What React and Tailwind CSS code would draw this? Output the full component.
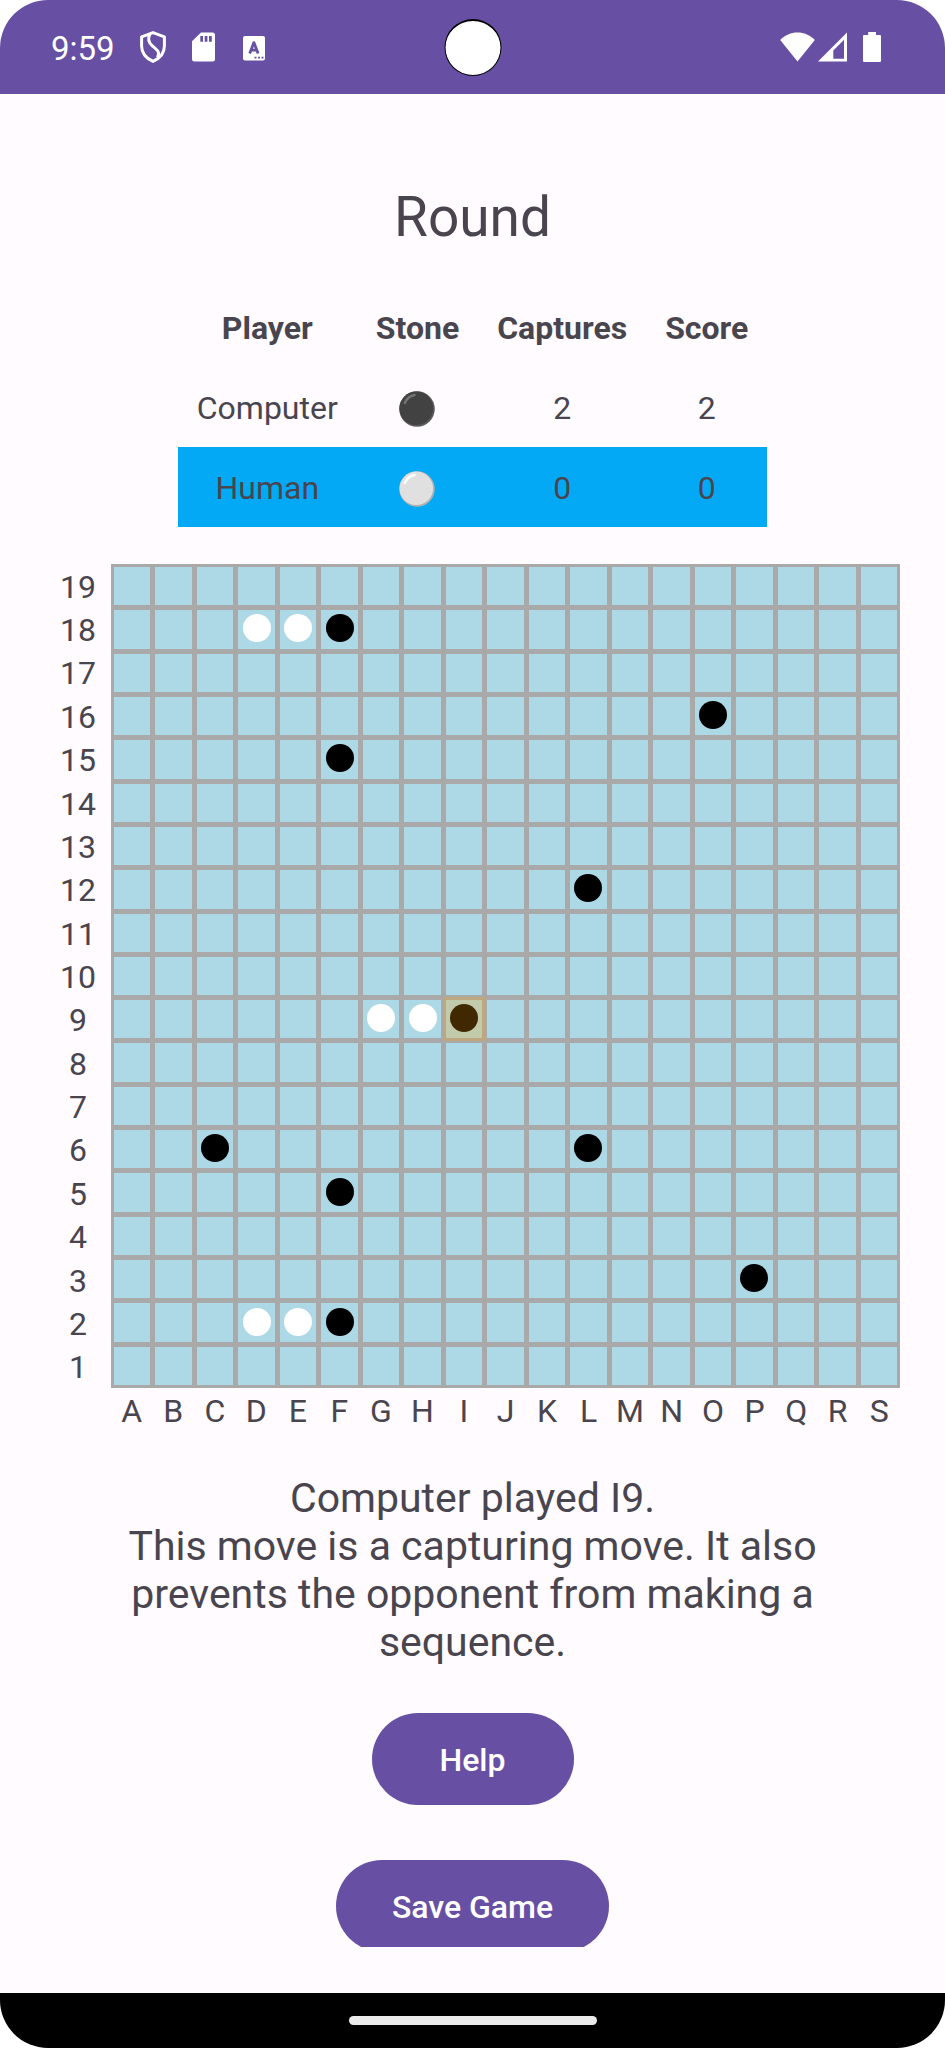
const COLUMNS = 'ABCDEFGHIJKLMNOPQRS'.split('');
const ROWS = Array.from({ length: 19 }, (_, i) => 19 - i);

const STONES = {
  D18: 'white',
  E18: 'white',
  F18: 'black',
  O16: 'black',
  F15: 'black',
  L12: 'black',
  G9: 'white',
  H9: 'white',
  I9: 'black',
  C6: 'black',
  L6: 'black',
  F5: 'black',
  P3: 'black',
  D2: 'white',
  E2: 'white',
  F2: 'black',
};

const LAST_MOVE = 'I9';

const PLAYERS = [
  { name: 'Computer', stone: 'black', captures: 2, score: 2, active: false },
  { name: 'Human', stone: 'white', captures: 0, score: 0, active: true },
];

function ShieldIcon() {
  return (
    <svg className="h-8 w-[26px]" viewBox="0 0 26 32" fill="none" stroke="#fff" strokeWidth="3" strokeLinejoin="round" aria-hidden="true">
      <path d="M13 1.600 L24.400 5.800 V15 C24.400 22.500 19.500 27.500 13 30.400 C6.500 27.500 1.600 22.500 1.600 15 V5.800 Z" />
      <path d="M9.800 3 C7.500 8 8.300 11.500 12.500 15 C17.500 19 20.300 21 17.500 26.500" />
    </svg>
  );
}

function SdCardIcon() {
  return (
    <svg className="h-[30px] w-[23px]" viewBox="0 0 23 30" aria-hidden="true">
      <path fill="#fff" d="M9 0.500 H20.500 A2.500 2.500 0 0 1 23 3 V27 A2.500 2.500 0 0 1 20.500 29.500 H2.500 A2.500 2.500 0 0 1 0 27 V9.300 Z" />
      <path fill="#6750a4" d="M8.300 4 H11 V9.700 H8.300 Z M12.700 4 H15.400 V9.700 H12.700 Z M17 4 H19.800 V9.700 H17 Z" />
    </svg>
  );
}

function KeyboardIcon() {
  return (
    <svg className="h-[25px] w-[22px]" viewBox="0 0 22 25" aria-hidden="true">
      <rect width="22" height="24.500" rx="2" fill="#fff" />
      <path d="M6.700 17.600 L10.900 6.600 L15.100 17.600 M8.200 14.200 H13.600" fill="none" stroke="#6750a4" strokeWidth="2.800" strokeLinejoin="round" />
      <path d="M11.500 20.700 H13.500 V22.500 H11.500 Z M15 20.700 H17 V22.500 H15 Z M18.500 20.700 H20.500 V22.500 H18.500 Z" fill="#6750a4" />
    </svg>
  );
}

function WifiIcon() {
  return (
    <svg className="h-[30px] w-[35px]" viewBox="0 0 35 30" fill="#fff" aria-hidden="true">
      <path d="M17.500 29.500 L0.200 8 C5 3 11 0.500 17.500 0.500 C24 0.500 30 3 34.800 8 Z" />
    </svg>
  );
}

function SignalIcon() {
  return (
    <svg className="h-[30px] w-[29px]" viewBox="0 0 29 30" aria-hidden="true">
      <path fill="#fff" fillRule="evenodd" d="M29 0.500 V29.500 H0 Z M26 7.800 L15.300 18.500 V26.700 H26 Z" />
    </svg>
  );
}

function BatteryIcon() {
  return (
    <svg className="h-[30px] w-[18px]" viewBox="0 0 18 30" fill="#fff" aria-hidden="true">
      <path d="M5.200 0 H13 V3 H17 Q18 3 18 4 V29 Q18 30 17 30 H1 Q0 30 0 29 V4 Q0 3 1 3 H5.200 Z" />
    </svg>
  );
}

function StoneBadge({ color }) {
  const dark = color === 'black';
  return (
    <svg className="mx-auto size-9" viewBox="0 0 36 36" role="img" aria-label={color}>
      <circle cx="18" cy="18" r="17.800" fill={dark ? '#5a5a5a' : '#b0b0b0'} />
      <circle cx="17.300" cy="17.300" r="16.800" fill={dark ? '#424242' : '#e0e0e0'} />
      <path
        d="M5.800 12 C7.300 8 10.500 5 15.500 4"
        fill="none"
        stroke={dark ? '#757575' : '#ffffff'}
        strokeWidth="2.400"
        strokeLinecap="round"
      />
    </svg>
  );
}

function StatusBar() {
  return (
    <header className="relative flex h-[94px] shrink-0 items-center justify-between bg-[#6750a4] pl-[51px] pr-[64px] text-[33px] text-white">
      <div className="flex items-center">
        <span className="pt-[2px] leading-none">9:59</span>
        <div className="ml-[25px] flex items-center gap-[26px]">
          <ShieldIcon />
          <SdCardIcon />
          <div className="pl-[2px] pt-[2px]">
            <KeyboardIcon />
          </div>
        </div>
      </div>
      <div className="absolute left-1/2 top-[19px] size-[57px] -translate-x-1/2 rounded-full border border-t-2 border-black bg-white" />
      <div className="flex items-center gap-[3px]">
        <WifiIcon />
        <SignalIcon />
        <div className="ml-[13px] flex">
          <BatteryIcon />
        </div>
      </div>
    </header>
  );
}

function ScoreTable() {
  return (
    <table className="mx-auto mt-[38px] text-center text-[32px] leading-[37px]">
      <thead>
        <tr className="h-20">
          {['Player', 'Stone', 'Captures', 'Score'].map((title) => (
            <th key={title} scope="col" className="px-[19px] pt-[3px] font-bold">
              {title}
            </th>
          ))}
        </tr>
      </thead>
      <tbody>
        {PLAYERS.map((player) => (
          <tr key={player.name} className={player.active ? 'h-20 bg-[#03a9f4]' : 'h-20'}>
            <td className="px-[19px] pt-[3px]">{player.name}</td>
            <td className="px-[19px] pt-[3px]">
              <StoneBadge color={player.stone} />
            </td>
            <td className="px-[19px] pt-[3px]">{player.captures}</td>
            <td className="px-[19px] pt-[3px]">{player.score}</td>
          </tr>
        ))}
      </tbody>
    </table>
  );
}

function Cell({ id }) {
  const stone = STONES[id];
  return (
    <button
      type="button"
      aria-label={stone ? `${id}, ${stone} stone` : id}
      className="relative flex min-h-0 min-w-0 items-center justify-center bg-[#add8e6] pb-[2px]"
    >
      {stone && (
        <span className={stone === 'white' ? 'size-7 rounded-full bg-white' : 'size-7 rounded-full bg-black'} />
      )}
      {id === LAST_MOVE && <span className="absolute -inset-[3px] bg-[#ffa500]/25" />}
    </button>
  );
}

function Board() {
  return (
    <section aria-label="Board" className="mt-[37px] grid grid-cols-[66px_1fr] px-[45px] text-[32px]">
      <div className="grid grid-rows-[repeat(19,minmax(0,1fr))] text-center">
        {ROWS.map((row) => (
          <span key={row} className="flex items-center justify-center pt-[2px] leading-none">
            {row}
          </span>
        ))}
      </div>
      <div className="grid aspect-[789/824] grid-cols-[repeat(19,minmax(0,1fr))] grid-rows-[repeat(19,minmax(0,1fr))] gap-[5px] bg-[#a9a9a9] p-[3px]">
        {ROWS.map((row) => COLUMNS.map((column) => <Cell key={column + row} id={column + row} />))}
      </div>
      <div className="col-start-2 grid grid-cols-[repeat(19,minmax(0,1fr))] text-center leading-[46px]">
        {COLUMNS.map((column) => (
          <span key={column}>{column}</span>
        ))}
      </div>
    </section>
  );
}

function PillButton({ children }) {
  return (
    <button
      type="button"
      className="h-[92px] min-w-[202px] rounded-full bg-[#6750a4] px-14 pt-[2px] text-[32px] font-medium text-white"
    >
      {children}
    </button>
  );
}

export default function App() {
  return (
    <div className="h-screen bg-white">
      <div className="flex h-full flex-col overflow-hidden rounded-[48px] bg-[#fffbfe] font-[Roboto,sans-serif] text-[#49454f]">
        <StatusBar />
        <main className="mb-[46px] min-h-0 flex-1 overflow-y-auto [scrollbar-width:none]">
          <h1 className="mt-[91px] text-center text-[55px] leading-[64px]">Round</h1>
          <ScoreTable />
          <Board />
          <p className="mx-auto mt-10 max-w-[740px] text-center text-[41px] leading-[48px]">
            Computer played I9.
            <br />
            This move is a capturing move. It also prevents the opponent from making a sequence.
          </p>
          <div className="mt-[47px] flex flex-col items-center gap-[55px]">
            <PillButton>Help</PillButton>
            <PillButton>Save Game</PillButton>
          </div>
        </main>
        <footer className="flex h-[55px] shrink-0 items-center justify-center bg-black">
          <div className="h-[9px] w-[248px] rounded-full bg-[#ebebeb]" />
        </footer>
      </div>
    </div>
  );
}
